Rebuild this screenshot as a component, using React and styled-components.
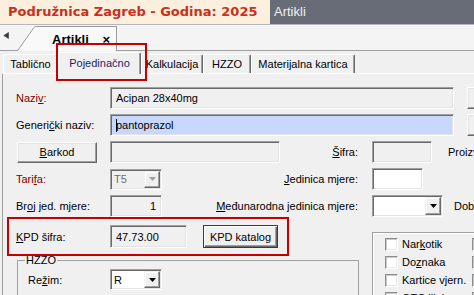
import React from "react";
import styled, { createGlobalStyle } from "styled-components";

const GlobalStyle = createGlobalStyle`
  html, body { margin: 0; padding: 0; }
  body {
    background: #f0f0f0;
    font-family: "Liberation Sans", Arial, sans-serif;
    font-size: 11px;
    color: #000;
    overflow: hidden;
  }
  * { box-sizing: border-box; }
`;

const Page = styled.div`
  position: relative;
  width: 474px;
  height: 295px;
  overflow: hidden;
  background: #f0f0f0;
`;

const TitleBar = styled.div`
  display: flex;
  height: 24px;
`;

const Branch = styled.div`
  width: 270px;
  background: #fcefdd;
  color: #c8321c;
  font-family: "DejaVu Sans", sans-serif;
  font-weight: bold;
  font-size: 13px;
  line-height: 24px;
  padding-left: 8px;
  white-space: nowrap;
`;

const WindowTitle = styled.div`
  flex: 1;
  background: #686c77;
  color: #eef0f3;
  font-size: 13px;
  line-height: 24px;
  padding-left: 4px;
`;

const DocStrip = styled.div`
  display: flex;
  align-items: flex-end;
  height: 27px;
  background: #f4f4f4;
  border-top: 1px solid #b3b6bc;
  border-bottom: 1px solid #a0a0a0;
  padding-left: 3px;
`;

const ScrollArrow = styled.svg`
  align-self: flex-start;
  margin-top: 7px;
  flex: none;
`;

const DocTab = styled.div`
  display: flex;
  height: 25px;
  margin-bottom: -1px;
  margin-left: 8px;
`;

const DocTabBody = styled.div`
  width: 81px;
  height: 25px;
  background: #f9f9f9;
  border-top: 1px solid #9a9a9a;
  border-right: 1px solid #9a9a9a;
  display: flex;
  align-items: center;
  padding-left: 16px;
  font-size: 13px;
  font-weight: bold;
`;

const CloseMark = styled.span`
  margin-left: auto;
  margin-right: 6px;
  font-size: 13px;
  font-weight: bold;
`;

const TabBar = styled.div`
  display: flex;
  align-items: flex-end;
  height: 22px;
  padding-left: 3px;
`;

const Tab = styled.div`
  position: relative;
  z-index: ${p => (p.$active ? 1 : 0)};
  flex: none;
  width: ${p => p.$w}px;
  height: ${p => (p.$active ? 22 : 19)}px;
  margin-bottom: ${p => (p.$active ? -1 : 0)}px;
  padding-bottom: ${p => (p.$active ? 2 : 0)}px;
  display: flex;
  align-items: center;
  justify-content: center;
  background: #f0f0f0;
  border-top: 1px solid #fff;
  border-left: 1px solid #fff;
  border-right: 1px solid #696969;
  border-radius: 2px 2px 0 0;
  box-shadow: inset -1px 0 #a0a0a0;
  color: ${p => (p.$active ? "#1e1e66" : "#000")};
  white-space: nowrap;
`;

const Highlight = styled.div`
  position: absolute;
  left: 56px;
  top: 43px;
  width: 91px;
  height: 38px;
  border: 2px solid #c40000;
  z-index: 5;
  pointer-events: none;
`;

const Panel = styled.div`
  margin-left: 2px;
  border-top: 1px solid #fff;
  border-left: 1px solid #a0a0a0;
  height: 222px;
`;

const FormRows = styled.div`
  display: flex;
  flex-direction: column;
  gap: 5px;
  padding: 13px 0 0 13px;
`;

const Row = styled.div`
  display: flex;
  align-items: center;
  height: ${p => p.$h || 22}px;
  flex: none;
`;

const Label = styled.div`
  flex: none;
  width: ${p => p.$w || 94}px;
  margin-left: ${p => p.$ml || 0}px;
  color: ${p => (p.$req ? "#800000" : "#000")};
  white-space: nowrap;
`;

const SideLabel = styled.div`
  flex: 1;
  text-align: right;
  white-space: nowrap;
`;

const Tail = styled.div`
  flex: none;
  width: 102px;
  margin-left: 14px;
  display: flex;
  align-items: center;
  white-space: nowrap;
`;

const FarLabel = styled.span`
  margin-left: ${p => p.$ml}px;
  white-space: nowrap;
`;

const Field = styled.div`
  flex: none;
  width: ${p => p.$w}px;
  height: ${p => p.$h || 22}px;
  background: ${p => p.$bg || "#fff"};
  border: 1px solid;
  border-color: #a0a0a0 #fff #fff #a0a0a0;
  box-shadow: inset 1px 1px #696969, inset -1px -1px #e3e3e3;
  display: flex;
  align-items: center;
  justify-content: ${p => (p.$right ? "flex-end" : "flex-start")};
  padding: 0 5px;
  white-space: nowrap;
  overflow: hidden;
`;

const Caret = styled.span`
  display: inline-block;
  width: 1px;
  height: 13px;
  background: #000;
  margin-right: -1px;
  position: relative;
  z-index: 1;
`;

const Combo = styled.div`
  flex: none;
  width: ${p => p.$w}px;
  height: ${p => p.$h || 21}px;
  background: ${p => (p.$disabled ? "#f0f0f0" : "#fff")};
  color: ${p => (p.$disabled ? "#6d6d6d" : "#000")};
  border: 1px solid;
  border-color: #a0a0a0 #fff #fff #a0a0a0;
  box-shadow: inset 1px 1px #696969, inset -1px -1px #e3e3e3;
  padding: 1px;
  display: flex;
  align-items: stretch;
`;

const ComboText = styled.span`
  flex: 1;
  display: flex;
  align-items: center;
  padding-left: 2px;
`;

const DropButton = styled.span`
  flex: none;
  width: 16px;
  background: #f0f0f0;
  border: 1px solid;
  border-color: #f0f0f0 #696969 #696969 #f0f0f0;
  box-shadow: inset -1px -1px #a0a0a0, inset 1px 1px #fff;
  display: flex;
  align-items: center;
  justify-content: center;
`;

const Button = styled.div`
  flex: none;
  width: ${p => p.$w}px;
  height: ${p => p.$h || 21}px;
  margin-left: ${p => p.$ml || 0}px;
  background: #f0f0f0;
  border: 1px solid;
  border-color: ${p =>
    p.$default ? "#3a3a3a" : "#fff #696969 #696969 #fff"};
  box-shadow: ${p =>
    p.$default
      ? "inset 1px 1px #fff, inset -1px -1px #696969, inset -2px -2px #a0a0a0"
      : "inset -1px -1px #a0a0a0, inset 1px 1px #e3e3e3"};
  display: flex;
  align-items: center;
  justify-content: center;
  white-space: nowrap;
`;

const Bottom = styled.div`
  display: flex;
  align-items: flex-start;
`;

const LeftCol = styled.div`
  flex: none;
  width: 356px;
  display: flex;
  flex-direction: column;
`;

const KpdBox = styled.div`
  margin-left: 4px;
  width: 282px;
  height: 39px;
  border: 2px solid #c40000;
  display: flex;
  align-items: center;
  padding-left: 7px;
`;

const GroupBox = styled.fieldset`
  margin: -1px 0 0 14px;
  width: 342px;
  min-width: 0;
  border: 1px solid #a0a0a0;
  padding: 4px 0 8px 7px;
`;

const GroupTitle = styled.legend`
  padding: 0 1px;
  line-height: 10px;
  font-size: 11px;
`;

const RightGroup = styled.div`
  flex: none;
  margin: 15px 0 0 13px;
  width: 200px;
  height: 80px;
  border-top: 1px solid #a0a0a0;
  border-left: 1px solid #a0a0a0;
  box-shadow: inset 1px 1px #fff;
  display: grid;
  grid-template-columns: 87px 1fr;
  grid-auto-rows: 18px;
  padding: 2px 0 0 12px;
`;

const CheckItem = styled.div`
  display: flex;
  align-items: center;
  white-space: nowrap;
`;

const Box = styled.span`
  flex: none;
  width: 13px;
  height: 13px;
  background: #fff;
  border: 1px solid;
  border-color: #8e8e8e #fff #fff #8e8e8e;
  box-shadow: inset 1px 1px #c8c8c8, inset -1px -1px #eaeaea;
  margin-right: 4px;
`;

const Arrow = ({ color = "#000" }) => (
  <svg width="7" height="4" viewBox="0 0 7 4">
    <path d="M0 0H7L3.5 4Z" fill={color} />
  </svg>
);

const tabs = [
  { name: "Tablično", w: 55 },
  { name: "Pojedinačno", w: 83, active: true },
  { name: "Kalkulacija", w: 62 },
  { name: "HZZO", w: 48 },
  { name: "Materijalna kartica", w: 104 },
];

const checks = [
  [<>Nar<u>k</u>otik</>, ""],
  [<>Do<u>z</u>naka</>, ""],
  ["Kartice vjern.", ""],
  ["OTC lijek", ""],
];

export default function App() {
  return (
    <Page>
      <GlobalStyle />
      <TitleBar>
        <Branch>Podružnica Zagreb - Godina: 2025</Branch>
        <WindowTitle>Artikli</WindowTitle>
      </TitleBar>

      <DocStrip>
        <ScrollArrow width="6" height="7" viewBox="0 0 6 7">
          <path d="M5.5 0.5L0.8 3.5L5.5 6.5Z" fill="#3a3a3a" stroke="#3a3a3a" strokeWidth="0.6" />
        </ScrollArrow>
        <DocTab>
          <svg width="19" height="25" viewBox="0 0 19 25">
            <path d="M0 25L17 1.5Q17.8 0.5 19 0.5V25Z" fill="#f9f9f9" />
            <path d="M0.3 25L17 1.5Q17.8 0.5 19 0.5" fill="none" stroke="#9a9a9a" strokeWidth="1" />
          </svg>
          <DocTabBody>
            Artikli
            <CloseMark>×</CloseMark>
          </DocTabBody>
        </DocTab>
      </DocStrip>

      <TabBar>
        {tabs.map(t => (
          <Tab key={t.name} $w={t.w} $active={t.active}>
            {t.name}
          </Tab>
        ))}
      </TabBar>
      <Highlight />

      <Panel>
        <FormRows>
          <Row>
            <Label $req>Nazi<u>v</u>:</Label>
            <Field $w={344} $bg="#f0f0f0">Acipan 28x40mg</Field>
            <Button $w={24} $h={22} $ml={13} />
          </Row>
          <Row>
            <Label>Generi<u>č</u>ki naziv:</Label>
            <Field $w={344} $bg="#c8d8fc">
              <Caret />
              pantoprazol
            </Field>
            <Button $w={24} $h={22} $ml={13} />
          </Row>
          <Row>
            <Label>
              <Button $w={80} $ml={1}>
                <span>
                  <u>B</u>arkod
                </span>
              </Button>
            </Label>
            <Field $w={170} $bg="#f0f0f0" />
            <SideLabel>
              <u>Š</u>ifra:
            </SideLabel>
            <Tail>
              <Field $w={60} $bg="#f0f0f0" />
              <FarLabel $ml={16}>Proizvođač:</FarLabel>
            </Tail>
          </Row>
          <Row>
            <Label $req>Tari<u>f</u>a:</Label>
            <Combo $w={52} $disabled>
              <ComboText>T5</ComboText>
              <DropButton>
                <Arrow color="#a0a0a0" />
              </DropButton>
            </Combo>
            <SideLabel>
              <u>J</u>edinica mjere:
            </SideLabel>
            <Tail>
              <Field $w={51} />
            </Tail>
          </Row>
          <Row>
            <Label>Br<u>o</u>j jed. mjere:</Label>
            <Field $w={52} $bg="#f0f0f0" $right>1</Field>
            <SideLabel>
              <u>M</u>eđunarodna jedinica mjere:
            </SideLabel>
            <Tail>
              <Combo $w={71} $h={22}>
                <ComboText />
                <DropButton>
                  <Arrow />
                </DropButton>
              </Combo>
              <FarLabel $ml={11}>Dobavljač:</FarLabel>
            </Tail>
          </Row>
        </FormRows>

        <Bottom>
          <LeftCol>
            <KpdBox>
              <Label>
                <u>K</u>PD šifra:
              </Label>
              <Field $w={77} $h={23} $bg="#f0f0f0">47.73.00</Field>
              <Button $w={75} $h={23} $ml={16} $default>
                KPD katalog
              </Button>
            </KpdBox>
            <GroupBox>
              <GroupTitle>HZZO</GroupTitle>
              <Row $h={21}>
                <Label $w={82} $ml={3}>
                  Re<u>ž</u>im:
                </Label>
                <Combo $w={52}>
                  <ComboText>R</ComboText>
                  <DropButton>
                    <Arrow />
                  </DropButton>
                </Combo>
              </Row>
            </GroupBox>
          </LeftCol>
          <RightGroup>
            {checks.map((c, i) => (
              <React.Fragment key={i}>
                <CheckItem>
                  <Box />
                  {c[0]}
                </CheckItem>
                <CheckItem>
                  <Box />
                  {c[1]}
                </CheckItem>
              </React.Fragment>
            ))}
          </RightGroup>
        </Bottom>
      </Panel>
    </Page>
  );
}
